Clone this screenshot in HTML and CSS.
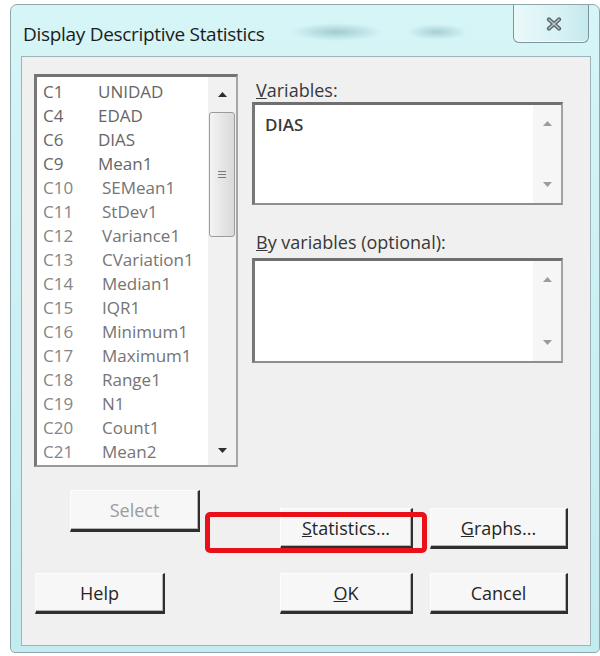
FILE: index.html
```html
<!DOCTYPE html>
<html lang="en">
<head>
<meta charset="utf-8">
<title>Display Descriptive Statistics</title>
<link rel="stylesheet" href="styles.css">
</head>
<body>
<div class="window">
  <div class="titlebar">
    <span class="title">Display Descriptive Statistics</span>
    <button class="close" type="button" aria-label="Close">
      <svg class="close-glyph" width="16" height="14" viewBox="0 0 16 14">
        <path d="M3 2.5 13 11.5M13 2.5 3 11.5" stroke="#58656a" stroke-width="4.2" stroke-linecap="round"/>
        <path d="M3 2.5 13 11.5M13 2.5 3 11.5" stroke="#b9c4c7" stroke-width="1.6" stroke-linecap="round"/>
      </svg>
    </button>
  </div>

  <div class="client">
    <div class="top">
      <div class="listbox">
        <ul class="columns">
          <li class="item"><span>C1</span><span>UNIDAD</span></li>
          <li class="item"><span>C4</span><span>EDAD</span></li>
          <li class="item"><span>C6</span><span>DIAS</span></li>
          <li class="item"><span>C9</span><span>Mean1</span></li>
          <li class="item item--dim"><span>C10</span><span class="name">SEMean1</span></li>
          <li class="item item--dim"><span>C11</span><span class="name">StDev1</span></li>
          <li class="item item--dim"><span>C12</span><span class="name">Variance1</span></li>
          <li class="item item--dim"><span>C13</span><span class="name">CVariation1</span></li>
          <li class="item item--dim"><span>C14</span><span class="name">Median1</span></li>
          <li class="item item--dim"><span>C15</span><span class="name">IQR1</span></li>
          <li class="item item--dim"><span>C16</span><span class="name">Minimum1</span></li>
          <li class="item item--dim"><span>C17</span><span class="name">Maximum1</span></li>
          <li class="item item--dim"><span>C18</span><span class="name">Range1</span></li>
          <li class="item item--dim"><span>C19</span><span class="name">N1</span></li>
          <li class="item item--dim"><span>C20</span><span class="name">Count1</span></li>
          <li class="item item--dim"><span>C21</span><span class="name">Mean2</span></li>
        </ul>
        <div class="scrollbar">
          <span class="arrow-cell arrow-cell--up">
            <svg class="arrow" width="9" height="5" viewBox="0 0 9 5"><path d="M0 5 4.5 0 9 5z"/></svg>
          </span>
          <span class="thumb"><span class="grip"></span></span>
          <span class="track-rest"></span>
          <span class="arrow-cell arrow-cell--down">
            <svg class="arrow" width="9" height="5" viewBox="0 0 9 5"><path d="M0 0 4.5 5 9 0z"/></svg>
          </span>
        </div>
      </div>

      <div class="fields">
        <label class="field-label"><u>V</u>ariables:</label>
        <div class="textbox textbox--vars">
          <div class="entries">DIAS</div>
          <div class="vscroll">
            <svg class="arrow arrow--light" width="9" height="5" viewBox="0 0 9 5"><path d="M0 5 4.5 0 9 5z"/></svg>
            <svg class="arrow arrow--light" width="9" height="5" viewBox="0 0 9 5"><path d="M0 0 4.5 5 9 0z"/></svg>
          </div>
        </div>
        <label class="field-label field-label--by"><u>B</u>y variables (optional):</label>
        <div class="textbox textbox--by">
          <div class="entries"></div>
          <div class="vscroll">
            <svg class="arrow arrow--light" width="9" height="5" viewBox="0 0 9 5"><path d="M0 5 4.5 0 9 5z"/></svg>
            <svg class="arrow arrow--light" width="9" height="5" viewBox="0 0 9 5"><path d="M0 0 4.5 5 9 0z"/></svg>
          </div>
        </div>
      </div>
    </div>

    <div class="actions">
      <button class="btn btn--select" type="button" disabled>Select</button>
      <button class="btn btn--stats" type="button"><u>S</u>tatistics...</button>
      <button class="btn btn--graphs" type="button"><u>G</u>raphs...</button>
      <button class="btn btn--help" type="button">Help</button>
      <button class="btn btn--ok" type="button"><u>O</u>K</button>
      <button class="btn btn--cancel" type="button">Cancel</button>
      <span class="callout"></span>
    </div>
  </div>
</div>
</body>
</html>
```

FILE: styles.css
```css
body {
  margin: 0;
  background: #fff;
  font-family: "Open Sans", "Noto Sans", sans-serif;
}

/* ---------- window frame ---------- */
.window {
  box-sizing: border-box;
  width: 590px;
  height: 649px;
  margin: 4px 0 0 10px;
  padding: 0 8px 6px 10px;
  display: flex;
  flex-direction: column;
  border: 1px solid #8fa7ac;
  border-radius: 7px 7px 5px 5px;
  background:
    radial-gradient(ellipse 46px 9px at 326px 27px, rgba(118, 172, 180, 0.55), transparent),
    radial-gradient(ellipse 30px 8px at 426px 27px, rgba(118, 172, 180, 0.5), transparent),
    linear-gradient(to bottom, #d6f5f7, #caf0f3 55%, #c3ecf0);
}

.titlebar {
  flex-shrink: 0;
  height: 51px;
  display: flex;
  align-items: flex-start;
}

.title {
  padding: 17px 0 0 2px;
  font-size: 19px;
  line-height: 24px;
  letter-spacing: -0.3px;
  color: #1c1c1c;
}

.close {
  margin: 0 2px 0 auto;
  width: 76px;
  height: 38px;
  padding: 0;
  display: flex;
  align-items: center;
  justify-content: center;
  border: 1px solid #7f959b;
  border-top: none;
  border-radius: 0 0 6px 6px;
  background: linear-gradient(to right, #eaf9fa, #d6f1f4 65%, #c4e9ed);
  box-shadow: inset 0 -1px 0 #f4fcfd;
}

.close-glyph {
  display: block;
  margin-left: 6px;
}

/* ---------- client area ---------- */
.client {
  flex: 1;
  background: #f0f0f0;
  border: 1px solid #9cb4b9;
}

.top {
  display: grid;
  grid-template-columns: 204px 311px;
  column-gap: 14px;
  align-items: start;
  padding: 17px 0 0 12px;
}

/* column list */
.listbox {
  box-sizing: border-box;
  height: 393px;
  display: flex;
  background: #fff;
  border-style: solid;
  border-width: 3px 2px 2px 3px;
  border-color: #737373 #a6a6a6 #9a9a9a #787878;
}

.columns {
  flex: 1;
  margin: 0;
  padding: 3px 0 0 6px;
  list-style: none;
  font-size: 17px;
  line-height: 24px;
  color: #666;
}

.item {
  display: grid;
  grid-template-columns: 55px auto;
  white-space: nowrap;
}

.item--dim {
  color: #858585;
}

.item--dim .name {
  padding-left: 4px;
  color: #747474;
}

.scrollbar {
  width: 28px;
  display: flex;
  flex-direction: column;
  align-items: center;
  background: #f1f1f1;
}

.arrow-cell {
  width: 100%;
  display: flex;
  align-items: center;
  justify-content: center;
}

.arrow-cell--up {
  height: 35px;
}

.arrow-cell--down {
  height: 30px;
}

.arrow {
  display: block;
  fill: #2e2e2e;
}

.arrow--light {
  fill: #9c9c9c;
}

.thumb {
  box-sizing: border-box;
  width: 26px;
  height: 125px;
  display: flex;
  align-items: center;
  justify-content: center;
  border: 1px solid #9b9b9b;
  border-radius: 3px;
  background: linear-gradient(to right, #f5f5f5, #e6e6e6 50%, #d9d9d9);
}

.grip {
  width: 8px;
  height: 7px;
  background: repeating-linear-gradient(to bottom, #7a7a7a 0 1px, transparent 1px 3px);
}

.track-rest {
  flex: 1;
}

/* variable fields */
.fields {
  display: flex;
  flex-direction: column;
}

.field-label {
  display: block;
  margin: 4px 0 0;
  padding-left: 4px;
  font-size: 18px;
  line-height: 24px;
  color: #383838;
}

.field-label--by {
  margin: 25px 0 4px;
}

.textbox {
  box-sizing: border-box;
  display: flex;
  background: #fff;
  border-style: solid;
  border-width: 3px 2px 2px 3px;
  border-color: #6f6f6f #a2a2a2 #8e8e8e #777;
}

.textbox--vars {
  height: 103px;
}

.textbox--by {
  height: 105px;
}

.entries {
  flex: 1;
  padding: 8px 0 0 10px;
  font-size: 17px;
  font-weight: 600;
  line-height: 24px;
  color: #3a3a3a;
}

.vscroll {
  box-sizing: border-box;
  width: 28px;
  padding: 16px 0;
  display: flex;
  flex-direction: column;
  justify-content: space-between;
  align-items: center;
  background: #f6f6f6;
}

/* ---------- buttons ---------- */
.actions {
  position: relative;
  display: grid;
  grid-template-columns: 165px 80px 133px 17px 138px;
  grid-template-rows: 59px 41px;
  row-gap: 24px;
  margin: 23px 0 0 13px;
}

.btn {
  box-sizing: border-box;
  height: 41px;
  padding: 0;
  display: flex;
  align-items: center;
  justify-content: center;
  font-family: "Open Sans", "Noto Sans", sans-serif;
  font-size: 18px;
  color: #262626;
  background: #f7f7f7;
  border-style: solid;
  border-width: 1px 2px 3px 1px;
  border-color: #fdfdfd #2f2f2f #2f2f2f #fdfdfd;
  box-shadow: inset -1px -1px 0 #b4b4b4;
}

.btn--select {
  grid-area: 1 / 1;
  justify-self: end;
  align-self: start;
  width: 130px;
  height: 42px;
  color: #9c9c9c;
}

.btn--stats {
  grid-area: 1 / 3;
  align-self: end;
}

.btn--graphs {
  grid-area: 1 / 5;
  align-self: end;
}

.btn--help {
  grid-area: 2 / 1;
  width: 130px;
}

.btn--ok {
  grid-area: 2 / 3;
}

.btn--cancel {
  grid-area: 2 / 5;
}

/* red highlight drawn over the Statistics button */
.callout {
  position: absolute;
  left: 170px;
  top: 22px;
  box-sizing: border-box;
  width: 222px;
  height: 41px;
  border: 5px solid #e8111a;
  border-radius: 5px;
  pointer-events: none;
}
```
